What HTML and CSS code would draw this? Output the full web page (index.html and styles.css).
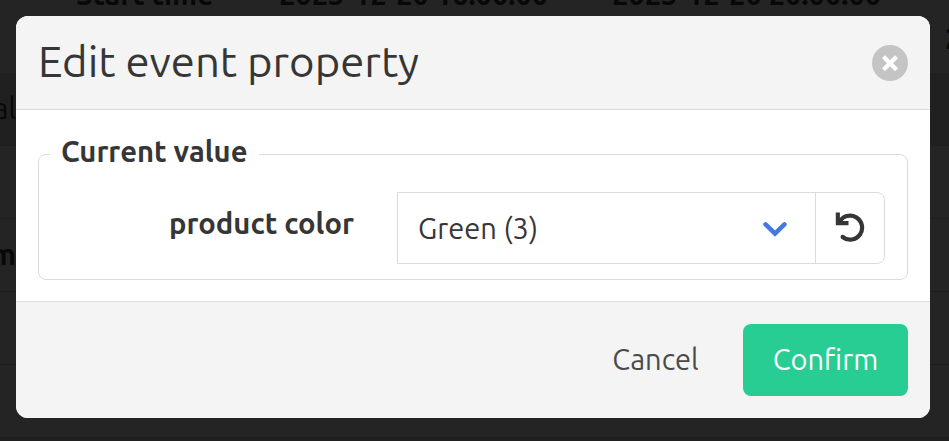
FILE: index.html
```html
<!DOCTYPE html>
<html lang="en">
<head>
  <meta charset="UTF-8" />
  <meta name="viewport" content="width=device-width, initial-scale=1.0" />
  <title>Edit event property</title>
  <link rel="stylesheet" href="styles.css">
</head>
<body>
  <div class="page" aria-hidden="true">
    <div class="row row-head">
      <span class="start">Start time</span>
      <span class="from">2023-12-20 16:00:00</span>
      <span class="to">2023-12-20 20:00:00</span>
      <span class="next">2023-12-21</span>
    </div>
    <div class="row row-dark"><span class="cut">al</span></div>
    <div class="row"></div>
    <div class="row"><b class="cut">m</b></div>
    <div class="row"></div>
    <div class="row"></div>
    <div class="row row-dark"></div>
  </div>

  <div class="overlay">
    <div class="modal" role="dialog">
      <header class="modal-header">
        <h1>Edit event property</h1>
        <button class="close" aria-label="Close">
          <svg width="36" height="36" viewBox="0 0 36 36">
            <circle cx="18" cy="18" r="18" fill="#c4c4c4" />
            <path d="M13 13.2L23 23.2M23 13.2L13 23.2" fill="none" stroke="#fff" stroke-width="4.3" stroke-linecap="square" />
          </svg>
        </button>
      </header>

      <div class="modal-body">
        <fieldset>
          <legend>Current value</legend>
          <div class="field">
            <label>product color</label>
            <div class="select">
              <span class="value">Green (3)</span>
              <svg class="arrow" width="24" height="16" viewBox="0 0 24 16">
                <path d="M2.6 3.4L12 12.6L21.4 3.4" fill="none" stroke="#4678e0" stroke-width="4.6" stroke-linecap="round" />
              </svg>
            </div>
            <button class="reset" aria-label="Reset">
              <svg width="30" height="30" viewBox="0 0 30 30">
                <path d="M4.4 10.2A12 12 0 1 1 7.6 25" fill="none" stroke="#363636" stroke-width="4.2" />
                <circle cx="7.6" cy="24.9" r="2.1" fill="#363636" />
                <path d="M.8 .6H4.9V7.4L7 5.2L9 7.2L7.2 9.1H13.5V13.2H.8Z" fill="#363636" />
              </svg>
            </button>
          </div>
        </fieldset>
      </div>

      <footer class="modal-footer">
        <button class="btn cancel">Cancel</button>
        <button class="btn confirm">Confirm</button>
      </footer>
    </div>
  </div>
</body>
</html>
```

FILE: styles.css
```css
* {
  box-sizing: border-box;
}

body {
  margin: 0;
  height: 441px;
  overflow: hidden;
  font-family: Ubuntu, "Noto Sans", sans-serif;
  font-size: 29px;
  color: #363636;
  background: #242424;
}

button {
  font: inherit;
  color: inherit;
  border: none;
  background: none;
  padding: 0;
}

svg {
  display: block;
}

/* dimmed table behind the dialog */
.page {
  height: 441px;
  overflow: hidden;
  color: #080808;
}

.row {
  display: flex;
  align-items: center;
  height: 73px;
  padding-bottom: 3px;
  border-bottom: 1px solid #1e1e1e;
  overflow: hidden;
}

.row-head {
  padding: 0;
  align-items: flex-start;
  border-bottom: none;
  font-weight: bold;
  line-height: 40px;
  white-space: nowrap;
}

.row-head span {
  flex: none;
  margin-top: -26px;
}

.row-head .start {
  width: 203px;
  margin-left: 76px;
}

.row-head .from {
  width: 333px;
}

.row-head .to {
  width: 333px;
}

.row-head .next {
  margin-top: 18px;
}

.row-dark {
  background: #202020;
}

.cut {
  width: 16px;
  display: flex;
  justify-content: flex-end;
}

.overlay {
  position: absolute;
  inset: 0;
  padding: 16px 19px 23px 16px;
}

.modal {
  display: flex;
  flex-direction: column;
  height: 402px;
  border-radius: 12px;
  background: #fff;
  overflow: hidden;
}

.modal-header {
  flex: none;
  display: flex;
  align-items: center;
  justify-content: space-between;
  height: 94px;
  padding: 0 22px;
  background: #f4f4f4;
  border-bottom: 1px solid #dbdbdb;
}

h1 {
  margin: 0;
  padding-bottom: 4px;
  font-size: 43.7px;
  font-weight: 400;
  line-height: 48px;
}

.modal-body {
  flex: 1;
  padding: 22px 22px 21px;
}

fieldset {
  height: 148px;
  margin: 0;
  padding: 16px 22px 15px;
  border: 1px solid #dbdbdb;
  border-radius: 8px;
}

legend {
  height: 44px;
  margin-left: -11px;
  padding: 0 11px 0 10px;
  border-left: 1px solid #fff;
  font-weight: bold;
  font-size: 29.2px;
  line-height: 39px;
}

.field {
  display: flex;
  height: 72px;
}

label {
  width: 336px;
  padding-right: 43px;
  font-weight: bold;
  font-size: 29.2px;
  line-height: 64px;
  text-align: right;
}

.select {
  flex: 1;
  display: flex;
  align-items: center;
  justify-content: space-between;
  padding: 0 28px 0 20px;
  border: 1px solid #dbdbdb;
}

.value {
  padding-bottom: 1px;
}

.arrow {
  margin-top: 2px;
}

.reset {
  display: flex;
  align-items: center;
  justify-content: center;
  width: 70px;
  margin-left: -1px;
  padding-bottom: 2px;
  border: 1px solid #dbdbdb;
  border-radius: 0 8px 8px 0;
}

.modal-footer {
  flex: none;
  display: flex;
  justify-content: flex-end;
  height: 117px;
  padding: 22px;
  background: #f4f4f4;
  border-top: 1px solid #dbdbdb;
}

.btn {
  height: 72px;
  padding-bottom: 3px;
  border-radius: 8px;
}

.cancel {
  width: 175px;
  color: #4a4a4a;
}

.confirm {
  width: 165px;
  color: #fff;
  background: #27cd93;
}
```
